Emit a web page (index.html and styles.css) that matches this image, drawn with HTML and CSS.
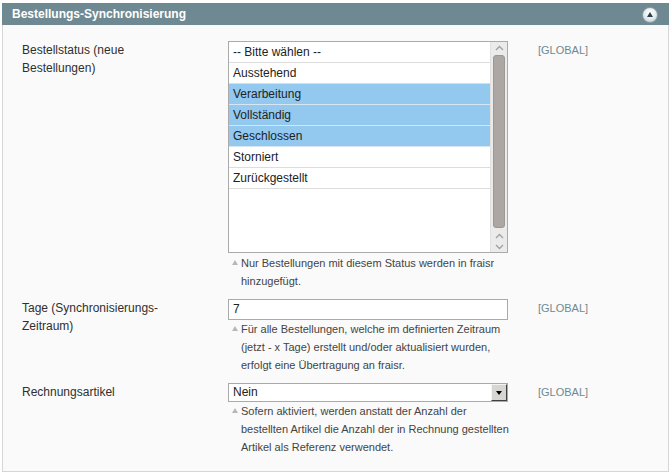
FILE: index.html
```html
<!DOCTYPE html>
<html lang="de">
<head>
<meta charset="utf-8">
<title>Bestellungs-Synchronisierung</title>
<link rel="stylesheet" href="styles.css">
</head>
<body>
<div class="section">
  <div class="section-head">
    <h4 class="section-title">Bestellungs-Synchronisierung</h4>
    <span class="collapse-btn"><span class="collapse-arrow"></span></span>
  </div>
  <div class="fieldset">
    <div class="row">
      <div class="label">Bestellstatus (neue Bestellungen)</div>
      <div class="value">
        <div class="listbox">
          <div class="options">
            <div class="option">-- Bitte wählen --</div>
            <div class="option">Ausstehend</div>
            <div class="option selected">Verarbeitung</div>
            <div class="option selected">Vollständig</div>
            <div class="option selected">Geschlossen</div>
            <div class="option">Storniert</div>
            <div class="option">Zurückgestellt</div>
          </div>
          <div class="scrollbar">
            <span class="sb-btn sb-top"><svg width="9" height="6" viewBox="0 0 9 6"><polyline points="1,5 4.5,1.5 8,5" fill="none" stroke="#a2a2a2" stroke-width="1.4"/></svg></span>
            <span class="sb-thumb"></span>
            <span class="sb-btn"><svg width="9" height="6" viewBox="0 0 9 6"><polyline points="1,5 4.5,1.5 8,5" fill="none" stroke="#a2a2a2" stroke-width="1.4"/></svg></span>
            <span class="sb-btn"><svg width="9" height="6" viewBox="0 0 9 6"><polyline points="1,1 4.5,4.5 8,1" fill="none" stroke="#a2a2a2" stroke-width="1.4"/></svg></span>
          </div>
        </div>
        <p class="note">Nur Bestellungen mit diesem Status werden in fraisr hinzugefügt.</p>
      </div>
      <div class="scope">[GLOBAL]</div>
    </div>
    <div class="row">
      <div class="label">Tage (Synchronisierungs-Zeitraum)</div>
      <div class="value">
        <div class="input">7</div>
        <p class="note">Für alle Bestellungen, welche im definierten Zeitraum (jetzt - x Tage) erstellt und/oder aktualisiert wurden, erfolgt eine Übertragung an fraisr.</p>
      </div>
      <div class="scope">[GLOBAL]</div>
    </div>
    <div class="row">
      <div class="label">Rechnungsartikel</div>
      <div class="value">
        <div class="select"><span class="select-text">Nein</span><span class="select-btn"><span class="select-arrow"></span></span></div>
        <p class="note">Sofern aktiviert, werden anstatt der Anzahl der bestellten Artikel die Anzahl der in Rechnung gestellten Artikel als Referenz verwendet.</p>
      </div>
      <div class="scope">[GLOBAL]</div>
    </div>
  </div>
</div>
</body>
</html>
```

FILE: styles.css
```css
* { box-sizing: border-box; }
html, body { background: #ffffff; }
body {
  margin: 0;
  padding: 3px 3px 0 2px;
  font-family: "Liberation Sans", Arial, sans-serif;
  font-size: 12px;
  color: #2f2f2f;
}
.section { width: 667px; }
.section-head {
  height: 22px;
  background: #6f8992;
  display: flex;
  align-items: center;
  justify-content: space-between;
  padding: 0 11px 0 10px;
}
.section-title {
  margin: 0;
  font-size: 12px;
  font-weight: bold;
  color: #ffffff;
  line-height: 22px;
}
.collapse-btn {
  width: 16px;
  height: 16px;
  border-radius: 50%;
  background: radial-gradient(circle at 50% 35%, #ffffff 0%, #e4e9eb 55%, #aebdc2 100%);
  border: 1px solid #8aa0a8;
  display: flex;
  align-items: center;
  justify-content: center;
  margin-top: 1px;
}
.collapse-arrow {
  width: 0;
  height: 0;
  border-left: 3.5px solid transparent;
  border-right: 3.5px solid transparent;
  border-bottom: 5px solid #24424f;
  margin-top: -1px;
}
.fieldset {
  background: #fafafa;
  border: 1px solid #d6d6d6;
  border-top: 0;
  padding: 16px 19px 15px 19px;
  display: flex;
  flex-direction: column;
  gap: 9px;
}
.row {
  display: grid;
  grid-template-columns: 206px 280px 1fr;
  align-items: start;
}
.label {
  line-height: 18px;
  padding-right: 60px;
}
.scope {
  padding-left: 30px;
  line-height: 18px;
  font-size: 11px;
  color: #6f8992;
}
.listbox {
  height: 212px;
  border: 1px solid #aaaaaa;
  background: #ffffff;
  display: flex;
}
.options { flex: 1; }
.option {
  height: 21px;
  line-height: 20px;
  padding-left: 4px;
  border-bottom: 1px solid #dddddd;
  color: #222222;
}
.option.selected { background: #93c8ef; border-bottom-color: #d6e6f2; }
.scrollbar {
  width: 17px;
  background: #ebebeb;
  border-left: 1px solid #e0e0e0;
  display: flex;
  flex-direction: column;
  align-items: center;
}
.sb-btn {
  height: 11px;
  display: flex;
  align-items: center;
  justify-content: center;
}
.sb-top { height: 12px; }
.sb-thumb {
  flex: 1;
  width: 12px;
  margin: 1px 0 2px;
  background: #aca7a3;
  border: 1px solid #9c9894;
  border-radius: 3px;
}
.note {
  margin: 1px -6px 0 0;
  padding-left: 13px;
  position: relative;
  font-size: 11px;
  line-height: 18px;
  color: #444444;
}
.note::before {
  content: "";
  position: absolute;
  left: 4px;
  top: 6px;
  width: 0;
  height: 0;
  border-left: 3px solid transparent;
  border-right: 3px solid transparent;
  border-bottom: 5px solid #b4b9bb;
}
.input {
  height: 21px;
  border: 1px solid #aaaaaa;
  background: #ffffff;
  line-height: 19px;
  padding-left: 4px;
  color: #222222;
}
.input + .note { margin-top: 0; }
.select {
  height: 19px;
  border: 1px solid #aaaaaa;
  background: #ffffff;
  display: flex;
  align-items: stretch;
  color: #222222;
}
.select + .note { margin-top: 0; }
.select-text { flex: 1; padding-left: 4px; line-height: 17px; }
.select-btn {
  width: 16px;
  background: #d8d6d2;
  border: 1px solid;
  border-color: #f4f4f4 #404040 #404040 #f4f4f4;
  display: flex;
  align-items: center;
  justify-content: center;
}
.select-arrow {
  width: 0;
  height: 0;
  border-left: 3.5px solid transparent;
  border-right: 3.5px solid transparent;
  border-top: 4px solid #000000;
}
```
